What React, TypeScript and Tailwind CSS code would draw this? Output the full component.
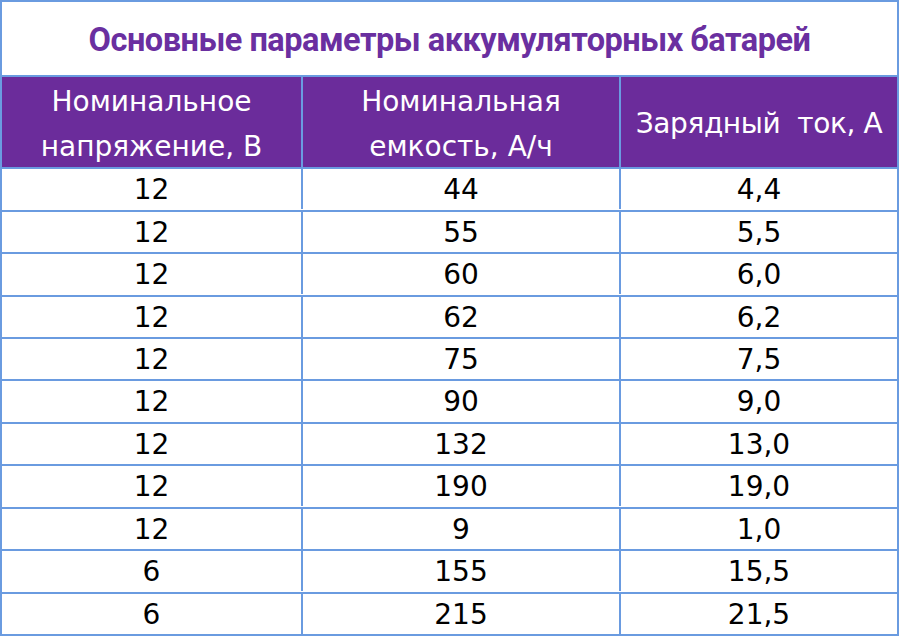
import React from "react";

const rows: [string, string, string][] = [
  ["12", "44", "4,4"],
  ["12", "55", "5,5"],
  ["12", "60", "6,0"],
  ["12", "62", "6,2"],
  ["12", "75", "7,5"],
  ["12", "90", "9,0"],
  ["12", "132", "13,0"],
  ["12", "190", "19,0"],
  ["12", "9", "1,0"],
  ["6", "155", "15,5"],
  ["6", "215", "21,5"],
];

export default function App() {
  return (
    <div className="w-[900px] h-[636px] bg-white" style={{ fontFamily: '"DejaVu Sans", "Liberation Sans", sans-serif' }}>
      <div className="w-[899px] h-[636px] border-x-2 border-t-2 border-b-2 border-[#6a9be0] flex flex-col">
        <div className="h-[75px] pt-[3px] flex items-center justify-center border-b-2 border-[#6a9be0]">
          <span className="text-[#6a2fa0] font-bold text-[32.5px] tracking-[-0.5px]" style={{ fontFamily: 'Roboto, "Liberation Sans", sans-serif' }}>
            Основные параметры аккумуляторных батарей
          </span>
        </div>
        <div className="grid grid-cols-[301px_318px_1fr] flex-1">
          <div className="h-[90px] pt-[3px] bg-[#6b2c9b] text-white text-[28px] leading-[45px] flex flex-col items-center justify-center border-r-2 border-[#6a9be0]">
            <span>Номинальное</span>
            <span>напряжение, В</span>
          </div>
          <div className="h-[90px] pt-[3px] bg-[#6b2c9b] text-white text-[28px] leading-[45px] flex flex-col items-center justify-center border-r-2 border-[#6a9be0]">
            <span>Номинальная</span>
            <span>емкость, А/ч</span>
          </div>
          <div className="h-[90px] pt-[3px] bg-[#6b2c9b] text-white text-[28px] leading-[45px] flex flex-col items-center justify-center">
            <span className="tracking-[-0.4px]">Зарядный&nbsp; ток, А</span>
          </div>
          {rows.map((r, i) => (
            <React.Fragment key={i}>
              {r.map((c, j) => (
                <div
                  key={j}
                  className={
                    "h-[42.2px] pt-[2px] flex items-center justify-center text-[28px] text-black border-t-2 border-[#6a9be0] " +
                    (j < 2 ? "border-r-2" : "")
                  }
                >
                  {c}
                </div>
              ))}
            </React.Fragment>
          ))}
        </div>
      </div>
    </div>
  );
}
